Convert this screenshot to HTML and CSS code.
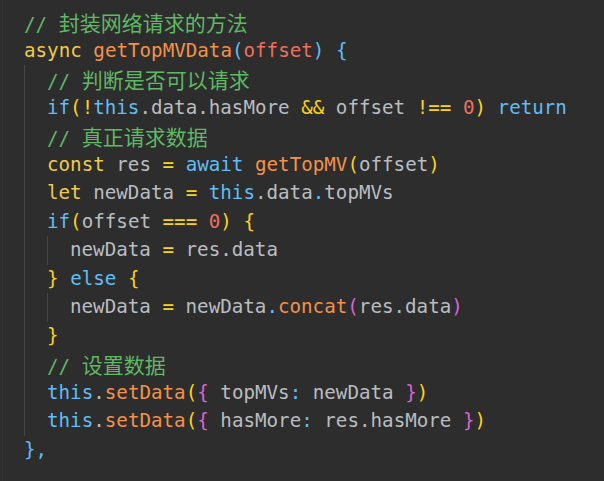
FILE: index.html
```html
<!DOCTYPE html>
<html lang="zh">
<head>
<meta charset="utf-8">
<link rel="stylesheet" href="styles.css">
</head>
<body>
<div class="editor">
  <div class="ln"><span class="c">// <span class="cjk">封装网络请求的方法</span></span></div>
  <div class="ln"><span class="k">async</span> <span class="f">getTopMVData</span><span class="b">(</span><span class="p">offset</span><span class="b">)</span> <span class="b">{</span></div>
  <div class="blk">
    <div class="ln"><span class="c">// <span class="cjk">判断是否可以请求</span></span></div>
    <div class="ln"><span class="b">if</span><span class="y">(!</span><span class="b">this</span>.data.hasMore <span class="y">&amp;&amp;</span> offset <span class="y">!==</span> <span class="n">0</span><span class="y">)</span> <span class="b">return</span></div>
    <div class="ln"><span class="c">// <span class="cjk">真正请求数据</span></span></div>
    <div class="ln"><span class="k">const</span> res <span class="y">=</span> <span class="b">await</span> <span class="f">getTopMV</span><span class="y">(</span>offset<span class="y">)</span></div>
    <div class="ln"><span class="k">let</span> newData <span class="y">=</span> <span class="b">this</span>.data<span class="b">.</span>topMVs</div>
    <div class="ln"><span class="b">if</span><span class="y">(</span>offset <span class="y">===</span> <span class="n">0</span><span class="y">)</span> <span class="y">{</span></div>
    <div class="ln blk">newData <span class="y">=</span> res.data</div>
    <div class="ln"><span class="y">}</span> <span class="b">else</span> <span class="y">{</span></div>
    <div class="ln blk">newData <span class="y">=</span> newData<span class="b">.</span><span class="f">concat</span><span class="m">(</span>res.data<span class="m">)</span></div>
    <div class="ln"><span class="y">}</span></div>
    <div class="ln"><span class="c">// <span class="cjk">设置数据</span></span></div>
    <div class="ln"><span class="b">this</span>.<span class="f">setData</span><span class="y">(</span><span class="m">{</span> topMVs<span class="b">:</span> newData <span class="m">}</span><span class="y">)</span></div>
    <div class="ln"><span class="b">this</span>.<span class="f">setData</span><span class="y">(</span><span class="m">{</span> hasMore<span class="b">:</span> res.hasMore <span class="m">}</span><span class="y">)</span></div>
  </div>
  <div class="ln"><span class="b">},</span></div>
</div>
</body>
</html>
```

FILE: styles.css
```css
html, body {
  margin: 0;
  padding: 0;
  background: #2d2d2d;
  height: 100%;
}
body {
  padding-left: 2px;
  box-sizing: border-box;
}
.editor {
  border-left: 1px solid #363636;
  min-height: 100%;
  box-sizing: border-box;
  padding: 8px 0 0 21px;
  font-family: "DejaVu Sans Mono", "Liberation Mono", "Noto Sans CJK SC", monospace;
  font-size: 19.2px;
  line-height: 28.5px;
  color: #b9bdc1;
}
.ln {
  height: 28.5px;
  white-space: pre;
}
.blk {
  border-left: 1px solid #454545;
  padding-left: 22px;
}
.cjk {
  font-family: "Noto Sans CJK SC", sans-serif;
  font-size: 21px;
}
.c { color: #5fb863; }
.k { color: #efcb4b; }
.f { color: #f4914a; }
.p { color: #f06f5d; }
.b { color: #60bdf5; }
.y { color: #fbd21c; }
.n { color: #f06f5d; }
.m { color: #d565d8; }
```
